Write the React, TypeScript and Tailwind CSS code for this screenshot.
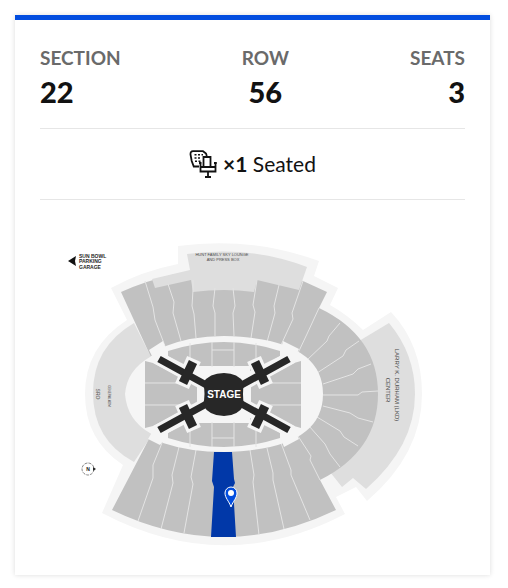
import React from 'react';

interface TicketDetail {
  label: string;
  value: string;
  align: string;
}

const details: TicketDetail[] = [
  { label: 'Section', value: '22', align: 'text-left' },
  { label: 'Row', value: '56', align: 'text-center' },
  { label: 'Seats', value: '3', align: 'text-right' },
];

// Aisles between the stand sections
const aisles = [
  'M145 281L153 307L155 320L165 346',
  'M168 284L174 302L173 313L181 341',
  'M193 280L193 290L192 306L194 314L196 338',
  'M215 288L213 306L215 313L215 336',
  'M233 288L235 306L233 313L234 336',
  'M257 280L253 305L255 312L251 338',
  'M279 285L274 306L275 313L267 342',
  'M303 281L292 313L293 319L281 345',
  'M319 308L307 334L298 353',
  'M340 323L329 336L327 341L307 360',
  'M359 341L346 350L343 356L317 373',
  'M371 364L358 369L353 374L323 384',
  'M378 391L362 392L358 395L323 395',
  'M373 422L358 418L350 413L323 406',
  'M358 446L344 437L340 431L317 417',
  'M340 467L330 454L325 444L309 426',
  'M320 480L310 460L311 456L298 436',
  'M310 520L291 475L291 470L281 443',
  'M284 529L273 480L273 473L267 448',
  'M259 535L253 482L254 475L250 450',
  'M184 533L193 484L191 477L196 450',
  'M161 529L173 483L172 475L179 447',
  'M138 521L153 478L153 465L162 443',
];

const floorLines = [
  'M190 343V366', 'M212 342V367', 'M234 342V367', 'M256 343V366', 'M212 350H234',
  'M190 423V447', 'M212 422V447', 'M234 422V447', 'M256 423V447', 'M212 438H234',
  'M145 383H197', 'M145 405H197', 'M251 383H301', 'M251 405H301',
];

const ramps = 'M159 359L210 387M289 359L238 387M159 430L210 402M289 430L238 402';
const crossbars = 'M193 362L183 383M255 362L265 383M183 406L193 427M265 406L255 427';

// Light margin kept free round the ramps and their crossbars
const rampMargin = 'M156 357L210 387M292 357L238 387M156 432L210 402M292 432L238 402';
const crossbarMargin = 'M194 359L182 386M254 359L266 386M182 403L194 430M266 403L254 430';

const SeatIcon = () => (
  <svg viewBox="0 0 28 28" className="h-7 w-7" fill="none" stroke="#121212" strokeWidth="1.8" aria-hidden="true">
    <path d="M10 16.500H4.800L2.700 11L1.500 4.500Q1.300 1.200 4 1.200H14L17 3.500L17.800 6" />
    <path d="M5.500 4.800H14M5.500 8H12M6 11.200H12" strokeDasharray="2 1.500" strokeWidth="1.600" />
    <path d="M14.500 16.500V7H21.500V16.500" />
    <path d="M11.500 12.500V21.500H26.500V12.500M10 13H12.500M25 13H27.800M11.500 17H26.500M19 21.500V27M16 27H22" />
  </svg>
);

const SeatMap = () => (
  <svg
    viewBox="40 225 425 325"
    className="block w-full font-['Liberation_Sans',sans-serif]"
    role="img"
    aria-label="Seat map, section 22 highlighted"
  >
    {/* Ground around the stadium */}
    <path
      fill="#f5f5f5"
      d="M111 288Q142 271 178 264V246Q250 236 319 261L314 276L338 288L330 305Q348 315 363 330L391 312Q422 345 422 394Q422 454 367 501L356 487L336 497L345 514Q224 577 102 513L123 465Q85 440 85 394Q85 347 127 320Z"
    />

    {/* Stands */}
    <path fill="#dedede" d="M134 323Q93 347 93 393Q93 440 134 462L150 438L166 394L150 355Z" />
    <path fill="#dedede" d="M359 341L389 323Q415 354 415 394Q415 446 366 489L353 478L342 487L330 472Z" />
    <path
      fill="#c1c1c1"
      d="M121 292Q212 252 303 281L327 292L319 308Q378 336 378 394Q378 451 320 480L336 510Q224 564 112 510L150 437L166 394L150 355Z"
    />
    <path fill="#dedede" d="M152 279L190 270L187 254Q250 245 307 267L299 290L257 280L254 292Q224 288 193 292L191 280L155 288Z" />
    <path fill="#dedede" d="M140 350L150 355L166 394L150 438L140 440Z" />
    <path d={aisles.join('')} fill="none" stroke="#e4e4e4" />

    {/* Floor */}
    <path fill="#f5f5f5" d="M125 394Q127 370 150 357L163 347Q190 336 224 336Q323 338 323 394Q323 450 224 452Q190 452 163 443L150 433Q127 420 125 394Z" />
    <path fill="#f5f5f5" d="M149 350L163 341L168 354L154 360ZM280 353L283 341L299 349L294 359ZM148 439L160 445L168 435L154 429ZM280 436L284 447L299 439L294 430Z" />
    <g fill="#c1c1c1">
      <path d="M168 351Q224 333 280 351V356L250 371V366H197V371L168 356Z" />
      <path d="M168 438Q224 456 280 438V433L250 418V423H197V418L168 433Z" />
      <path d="M145 361L153 363L197 386V403L153 426L145 428Z" />
      <path d="M301 361L294 363L251 386V403L294 426L301 428Z" />
    </g>
    <path d={floorLines.join('')} fill="none" stroke="#e4e4e4" />

    {/* Stage */}
    <path fill="#f5f5f5" d="M197 374Q209 366 224 366Q239 366 251 374V415Q239 423 224 423Q209 423 197 415Z" />
    <g fill="none" stroke="#f5f5f5">
      <path d={rampMargin} strokeWidth="13" />
      <path d={crossbarMargin} strokeWidth="15" />
    </g>
    <g fill="none" stroke="#272727">
      <path d={ramps} strokeWidth="7" />
      <path d={crossbars} strokeWidth="9" />
    </g>
    <path fill="#272727" d="M203 383Q209 373 224 373Q238 373 244 383Q242 394 244 405Q238 416 224 416Q209 416 203 405Q206 394 203 383Z" />
    <text x="224" y="398" textAnchor="middle" fill="#ffffff" className="text-[10px] font-bold">STAGE</text>

    {/* Selected section */}
    <path fill="#0138a8" d="M214 452H232L234 479L235 483L233 487L236 537H211L214 487L212 481Z" />
    <path fill="#024ddf" stroke="#ffffff" d="M231 507C229 501 225 498 225 493A6 6 0 0 1 237 493C237 498 233 501 231 507Z" />
    <circle cx="231" cy="493" r="3" fill="#ffffff" />

    <g fill="#4a4a4a" textAnchor="middle">
      <text className="text-[4px]">
        <tspan x="222" y="256">HUNT FAMILY SKY LOUNGE</tspan>
        <tspan x="223" y="261">AND PRESS BOX</tspan>
      </text>
      <text transform="translate(395 385) rotate(90)" className="text-[6px]">LARRY K. DURHAM (LKD)</text>
      <text transform="translate(386 390) rotate(90)" className="text-[6px]">CENTER</text>
      <text transform="translate(96 394) rotate(90)" className="text-[5px]">SRO</text>
      <text transform="translate(108 396) rotate(90)" className="text-[3px]">GENERAL ADM</text>
    </g>
    <path fill="#121212" d="M68 261L76 256L75 261L76 266Z" />
    <text fill="#272727" className="text-[5px] font-bold">
      <tspan x="79" y="258">SUN BOWL</tspan>
      <tspan x="79" y="263">PARKING</tspan>
      <tspan x="79" y="269">GARAGE</tspan>
    </text>

    {/* Compass */}
    <circle cx="88" cy="469" r="6" fill="none" stroke="#555555" strokeWidth="0.700" strokeDasharray="3 1" />
    <path fill="#272727" d="M93 467L96 469L93 471Z" />
    <text x="88" y="471" textAnchor="middle" fill="#121212" className="text-[5px] font-bold">N</text>
  </svg>
);

const App = () => {
  return (
    <main className="pt-[15px] pr-[18px] pb-3 pl-[15px] font-[Lato,sans-serif] text-[#121212]">
      <article className="border-t-5 border-[#024ddf] bg-white px-[25px] pb-[25px] shadow-[0_0_5px_rgba(0,0,0,0.14)]">
        <dl className="flex justify-between border-b border-[#e6e6e6] pt-[26px] pb-5">
          {details.map((item) => (
            <div key={item.label} className={item.align}>
              <dt className="text-[19px] leading-6 font-bold text-[#6a6a6a] uppercase">{item.label}</dt>
              <dd className="mt-1.5 text-[29px] leading-8 font-black">{item.value}</dd>
            </div>
          ))}
        </dl>

        <div className="flex h-[71px] items-center justify-center gap-1.5 border-b border-[#e6e6e6] text-[21px]">
          <SeatIcon />
          <p>
            <strong>×1</strong> Seated
          </p>
        </div>

        <div className="pt-[25px]">
          <SeatMap />
        </div>
      </article>
    </main>
  );
};

export default App;
